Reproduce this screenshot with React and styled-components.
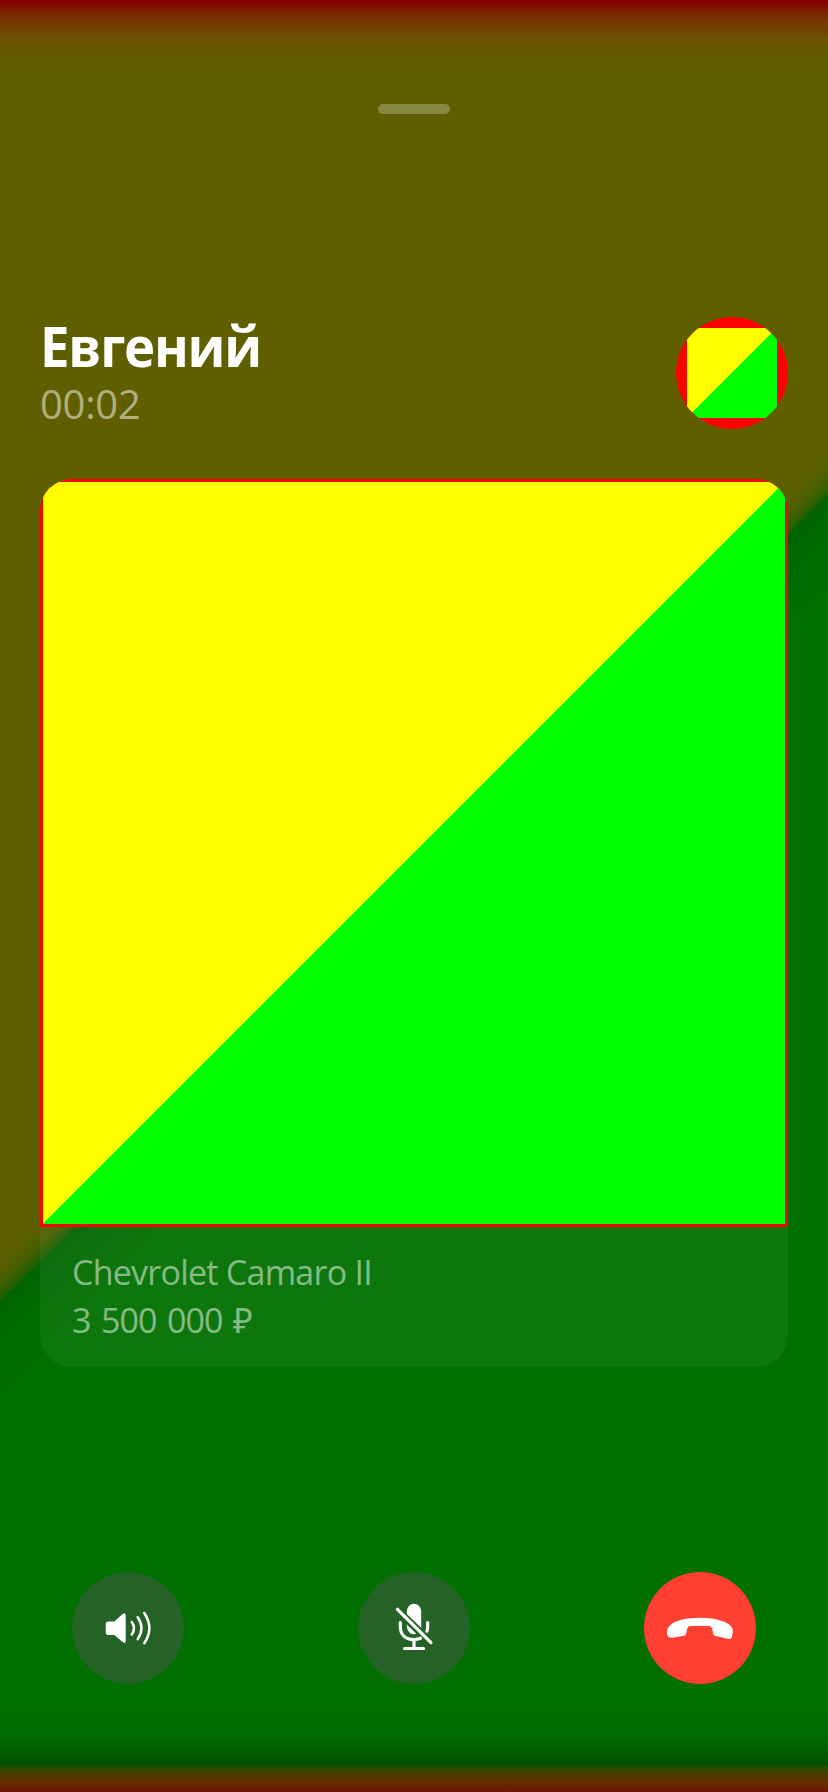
import React from "react";
import styled, { createGlobalStyle } from "styled-components";

const GlobalStyle = createGlobalStyle`
  * { box-sizing: border-box; }
  body { margin: 0; font-family: "Open Sans", "Noto Sans", sans-serif; }
`;

const Screen = styled.main`
  display: flex;
  flex-direction: column;
  width: 828px;
  height: 1792px;
  padding: 104px 40px 0;
  overflow: hidden;
  background:
    linear-gradient(to bottom, #840000 0, #840000 3px, #7d1f00 11px, #753800 21px, #6c4e00 37px, rgba(98, 90, 0, 0.9) 56px, rgba(95, 95, 0, 0) 76px),
    linear-gradient(to top, #701500 0, #623000 10px, #454000 20px, #204c00 26px, #005000 28px, rgba(0, 94, 0, 0.9) 42px, rgba(0, 106, 0, 0.7) 60px, rgba(0, 112, 0, 0) 84px),
    linear-gradient(135.8deg, #5f5f00 0, #5f5f00 48%, #585f00 48.8%, #426000 49.5%, #246000 49.95%, #006400 50.15%, #006a00 51.2%, #007000 54%, #007000 100%);
`;

const Handle = styled.div`
  align-self: center;
  width: 72px;
  height: 10px;
  border-radius: 5px;
  background: rgba(255, 255, 255, 0.26);
`;

const Header = styled.header`
  display: flex;
  justify-content: space-between;
  height: 162px;
  margin-top: 203px;
`;

const Caller = styled.div`
  display: flex;
  flex-direction: column;
`;

const Name = styled.h1`
  margin: 0;
  color: #fff;
  font-size: 56px;
  line-height: 57px;
  font-weight: 700;
  letter-spacing: -1.3px;
  transform: scaleX(0.94);
  transform-origin: left;
`;

const Timer = styled.time`
  margin-top: 3px;
  color: rgba(255, 255, 255, 0.5);
  font-size: 40px;
  line-height: 54px;
  letter-spacing: -0.3px;
`;

const Avatar = styled.div`
  width: 112px;
  height: 112px;
  padding: 11px;
  border-radius: 50%;
  overflow: hidden;
  background: #f00;
`;

const Card = styled.article`
  height: 888px;
  border-radius: 32px;
  overflow: hidden;
  background: rgba(255, 255, 255, 0.05);
`;

const Photo = styled.div`
  width: 748px;
  height: 748px;
  padding: 3px;
  background: #f00;
`;

const Picture = styled.div`
  width: 100%;
  height: 100%;
  background: linear-gradient(135deg, #ff0 50%, #0f0 50%);
`;

const Details = styled.div`
  padding: 21px 32px;
  color: rgba(255, 255, 255, 0.5);
  font-size: 34px;
  line-height: 48px;
`;

const Model = styled.div`
  letter-spacing: -0.75px;
`;

const Price = styled.div`
  letter-spacing: -1px;
  word-spacing: 2.8px;
`;

const Controls = styled.footer`
  display: flex;
  justify-content: space-between;
  margin-top: 205px;
  padding: 0 32px;
`;

const RoundButton = styled.button`
  width: 112px;
  height: 112px;
  padding: 0;
  border: 0;
  border-radius: 50%;
  background: ${({ $danger }) => ($danger ? "#ff3f31" : "#256225")};
`;

const Glyph = styled.svg`
  display: block;
`;

function SpeakerIcon() {
  return (
    <Glyph width="112" height="112" viewBox="0 0 112 112" fill="none">
      <path d="M36.5 49.5h5.7L51 41.8Q53.7 40.2 53.7 43.5V69Q53.7 72 51 70.3L42.2 63h-5.7Q33.7 63 33.7 60.2v-7.9q0-2.8 2.8-2.8z" fill="#fff" />
      <path d="M59.8 50q4.4 6.3 0 12.5M65.7 45.3q7.6 10.9 0 21.8M72.3 41q10.1 15.3 0 30.3" stroke="#fff" strokeWidth="2.5" strokeLinecap="round" />
    </Glyph>
  );
}

function MutedMicIcon() {
  return (
    <Glyph width="112" height="112" viewBox="0 0 112 112" fill="none" stroke="#fff" strokeWidth="3.2" strokeLinecap="round">
      <path d="M48.8 42v-3a7.2 7.2 0 0 1 14.4 0v16.8z" fill="#fff" stroke="none" />
      <path d="M48.8 52.5l9.4 9.1q-3 1.2-5.5-.2-3.9-2-3.9-8.9z" fill="#fff" stroke="none" />
      <path d="M42.3 50.5v4c0 8.6 5.7 13 13.7 13 2.5 0 4.7-.5 6.5-1.3M69.7 50.5v4c0 1.8-.3 3.3-.8 4.7M56 68v8M46.5 76.5h19" />
      <path d="M39.5 37.3l33.5 33.3" />
    </Glyph>
  );
}

function HangUpIcon() {
  return (
    <Glyph width="112" height="112" viewBox="0 0 112 112">
      <path d="M23 61.5C22.5 56 26 52 32 49.5c7-2.8 15-3.7 23.7-3.7s16.8 1 23.7 3.7C86 52 89.8 55.5 88.7 61c-.3 2-.6 3.2-1 4.3-.6 1.6-1.8 2-3.8 1.5l-12.5-2.7c-2.4-.6-2.3-4-3-6.7-.7-2.5-1.6-3.5-4-3.5H47.2c-2.8 0-3.6 1-4.2 3.6-.7 3-.5 5.8-3.2 6.3l-11 1.9c-3.4.6-5.3-.7-5.8-4.2z" fill="#fff" />
    </Glyph>
  );
}

export default function App() {
  return (
    <>
      <GlobalStyle />
      <Screen>
        <Handle />
        <Header>
          <Caller>
            <Name>Евгений</Name>
            <Timer>00:02</Timer>
          </Caller>
          <Avatar><Picture /></Avatar>
        </Header>
        <Card>
          <Photo><Picture /></Photo>
          <Details>
            <Model>Chevrolet Camaro II</Model>
            <Price>3 500 000 ₽</Price>
          </Details>
        </Card>
        <Controls>
          <RoundButton aria-label="Динамик"><SpeakerIcon /></RoundButton>
          <RoundButton aria-label="Микрофон"><MutedMicIcon /></RoundButton>
          <RoundButton $danger aria-label="Завершить"><HangUpIcon /></RoundButton>
        </Controls>
      </Screen>
    </>
  );
}
